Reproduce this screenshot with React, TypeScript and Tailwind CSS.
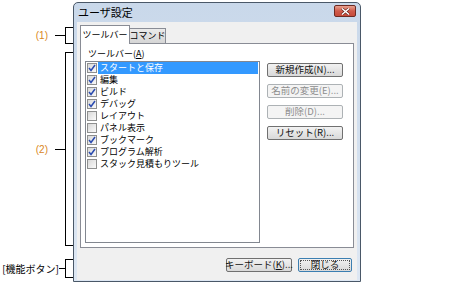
import React from 'react';

const jp = "font-['Noto_Sans_CJK_JP',sans-serif] font-features-['palt'] whitespace-nowrap";

const items = [
  { label: 'スタートと保存', checked: true, selected: true },
  { label: '編集', checked: true },
  { label: 'ビルド', checked: true },
  { label: 'デバッグ', checked: true },
  { label: 'レイアウト', checked: false },
  { label: 'パネル表示', checked: false },
  { label: 'ブックマーク', checked: true },
  { label: 'プログラム解析', checked: true },
  { label: 'スタック見積もりツール', checked: false },
];

function Bracket({ className, label, labelClass, lineClass }: { className: string; label: string; labelClass: string; lineClass: string }) {
  return (
    <div className={`flex items-center justify-end ${className}`}>
      <span className={labelClass}>{label}</span>
      <span className={`h-px bg-black ${lineClass}`} />
      <span className="w-[8px] self-stretch border-l border-t border-b border-black" />
    </div>
  );
}

function CheckBox({ checked }: { checked: boolean }) {
  return (
    <span className="w-[10px] h-[10px] flex-shrink-0 border border-[#8e8f8f] bg-linear-to-br from-[#d8d8d8] to-[#fafafa] flex items-center justify-center">
      {checked && (
        <svg width="8" height="8" viewBox="0 0 8 8">
          <path d="M1 4 L3 6.5 L7 1" fill="none" stroke="#2a4bb0" strokeWidth="1.5" />
        </svg>
      )}
    </span>
  );
}

function Button({ children, disabled, primary, className }: { children: React.ReactNode; disabled?: boolean; primary?: boolean; className: string }) {
  if (disabled) {
    return (
      <div className={`h-[14px] rounded-[2px] border border-[#adb2b5] bg-[#f4f4f4] text-[#8d8d8d] flex items-center justify-center text-[9.5px] leading-none ${className}`}>
        {children}
      </div>
    );
  }
  return (
    <div
      className={`h-[14px] rounded-[2px] border ${primary ? 'border-[#3c7fb1]' : 'border-[#707070]'} bg-linear-to-b from-[#f2f2f2] to-[#d9d9d9] text-[#111] flex items-center justify-center text-[9.5px] leading-none p-[1px] ${className}`}
    >
      <span className={`w-full h-full flex items-center justify-center ${primary ? 'border border-dotted border-[#555]' : ''}`}>{children}</span>
    </div>
  );
}

export default function App() {
  return (
    <div className={`w-[474px] h-[285px] bg-white flex ${jp}`}>
      {/* callouts */}
      <div className="w-[73px] flex flex-col flex-shrink-0">
        <Bracket className="mt-[27px] h-[17px]" label="(1)" labelClass="mr-[7px] text-[10px] text-[#d9861c] font-['Liberation_Sans',sans-serif]" lineClass="w-[10px]" />
        <Bracket className="mt-[8px] h-[194px]" label="(2)" labelClass="mr-[7px] text-[10px] text-[#d9861c] font-['Liberation_Sans',sans-serif]" lineClass="w-[10px]" />
        <Bracket className="mt-[13px] h-[19px]" label="[機能ボタン]" labelClass="text-[10px] text-black [font-feature-settings:normal]" lineClass="w-[6px]" />
      </div>

      {/* dialog */}
      <div className="mt-[2px] w-[288px] h-[280px] flex-shrink-0 rounded-t-[5px] border border-[#4a5868] bg-linear-to-b from-[#c9d8ea] to-[#dde7f3] flex flex-col px-[3px] pb-[1px]">
        <div className="h-[19px] flex items-start justify-between">
          <span className="pl-[1px] text-[11px] leading-[19px] text-black">ユーザ設定</span>
          <span className="mt-[2px] mr-[1px] w-[22px] h-[12px] rounded-[2px] border border-[#6d2a22] bg-linear-to-b from-[#e7a190] via-[#d05a4a] to-[#c64a3a] flex items-center justify-center">
            <svg width="9" height="7" viewBox="0 0 9 7">
              <path d="M1 0.5 L8 6.5 M8 0.5 L1 6.5" stroke="#5a1d16" strokeWidth="2.6" />
              <path d="M1 0.5 L8 6.5 M8 0.5 L1 6.5" stroke="#fff" strokeWidth="1.5" />
            </svg>
          </span>
        </div>

        <div className="flex-1 bg-[#f0f0f0] flex flex-col px-[3px] pt-[3px]">
          {/* tabs */}
          <div className="flex items-end h-[18px]">
            <div className="relative z-10 -mb-px h-[19px] w-[50px] border border-b-0 border-[#898c95] bg-white flex items-center justify-center text-[9px] text-black">
              ツールバー
            </div>
            <div className="h-[15px] w-[36px] border border-l-0 border-b-0 border-[#898c95] bg-linear-to-b from-[#ebebeb] to-[#d6d6d6] flex items-center justify-center text-[9px] text-black">
              コマンド
            </div>
          </div>

          {/* panel */}
          <div className="h-[205px] border border-[#898c95] bg-white flex flex-col pl-[4px] pt-[3px]">
            <div className="h-[14px] ml-[3px] text-[9px] leading-[14px] text-black">
              ツールバー(<span className="underline">A</span>)
            </div>
            <div className="flex gap-[7px]">
              <div className="w-[175px] h-[182px] border border-[#828790] bg-white flex flex-col">
                {items.map((it) => (
                  <div key={it.label} className="h-[12px] flex items-center">
                    <span className="ml-[1px]">
                      <CheckBox checked={it.checked} />
                    </span>
                    <span
                      className={`ml-[1px] h-[12px] flex-1 mr-px pl-[2px] text-[9px] leading-[12px] ${it.selected ? 'bg-[#3399ff] text-white' : 'text-black'}`}
                    >
                      {it.label}
                    </span>
                  </div>
                ))}
              </div>
              <div className="mt-[2px] w-[76px] flex flex-col gap-[7px]">
                <Button className="w-[76px]">新規作成(N)...</Button>
                <Button className="w-[76px]" disabled>名前の変更(E)...</Button>
                <Button className="w-[76px]" disabled>削除(D)...</Button>
                <Button className="w-[76px]">リセット(R)...</Button>
              </div>
            </div>
          </div>

          {/* footer buttons */}
          <div className="mt-[10px] flex justify-end gap-[6px] pr-[2px]">
            <Button className="w-[66px]">
              キーボード(<span className="underline">K</span>)...
            </Button>
            <Button className="w-[54px]" primary>閉じる</Button>
          </div>
        </div>
      </div>
    </div>
  );
}
